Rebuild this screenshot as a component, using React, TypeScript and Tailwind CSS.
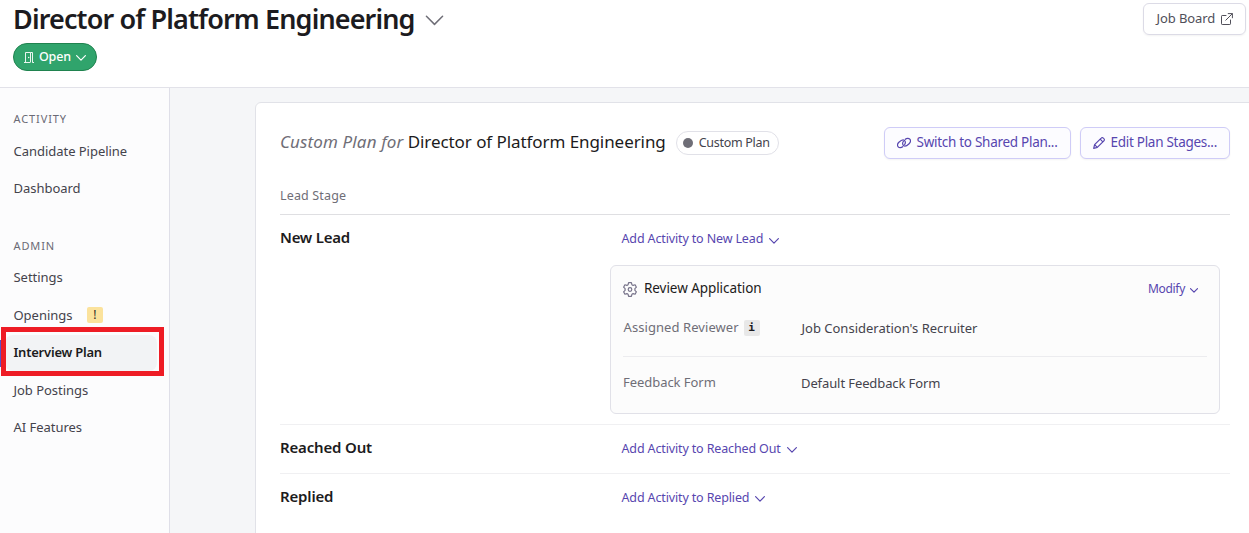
import { ReactNode } from 'react'
import clsx from 'clsx'

interface NavItem {
  label: string
  active?: boolean
  alert?: boolean
}

const activityItems: NavItem[] = [{ label: 'Candidate Pipeline' }, { label: 'Dashboard' }]

const adminItems: NavItem[] = [
  { label: 'Settings' },
  { label: 'Openings', alert: true },
  { label: 'Interview Plan', active: true },
  { label: 'Job Postings' },
  { label: 'AI Features' },
]

function Chevron({ className }: { className?: string }) {
  return (
    <svg viewBox="0 0 10 6" fill="none" stroke="currentColor" strokeWidth="1.2" strokeLinecap="round" strokeLinejoin="round" className={clsx('shrink-0', className)}>
      <path d="M0.6 0.7 5 5.1 9.4 0.7" vectorEffect="non-scaling-stroke" />
    </svg>
  )
}

function DoorIcon() {
  return (
    <svg width="10" height="12" viewBox="0 0 10 12" fill="none" stroke="currentColor" className="shrink-0">
      <path d="M0 11.5h6.500M1.500 11V1.500h5V11M6.500 1.500h2V11.500H10" strokeWidth=".9" />
      <circle cx="4.700" cy="6.500" r=".7" fill="currentColor" stroke="none" />
    </svg>
  )
}

function ExternalIcon() {
  return (
    <svg width="12" height="12" viewBox="0 0 12 12" fill="none" stroke="currentColor" strokeLinecap="round" strokeLinejoin="round" className="shrink-0">
      <path d="M5 2.500H1.200a.7.7 0 0 0-.7.7v7.600a.7.7 0 0 0 .7.7h7.600a.7.7 0 0 0 .7-.7V7M7.200.6h4.200v4.200M11.200.8 4.800 7.200" />
    </svg>
  )
}

function LinkIcon() {
  return (
    <svg width="14" height="12" viewBox="0 0 14 12" fill="none" stroke="currentColor" strokeWidth="1.2" strokeLinecap="round" className="shrink-0">
      <path d="M5.700 9.700C4.300 10.900 2.200 11 1.200 9.800S.4 6.700 1.900 5.300 5.700 2.300 7.200 3.300s1.500 3 .4 4.300" />
      <path d="M8.300 2.300C9.700 1.100 11.800 1 12.800 2.200s.8 3.100-.7 4.500S8.300 9.700 6.800 8.700s-1.500-3-.4-4.300" />
    </svg>
  )
}

function PencilIcon() {
  return (
    <svg width="12" height="12" viewBox="0 0 12 12" fill="none" stroke="currentColor" strokeWidth="1.2" strokeLinejoin="round" className="shrink-0">
      <path d="M.7 11.300 1.600 7.700 8.200 1.100a1.500 1.500 0 0 1 2.200 0l.5.5a1.500 1.500 0 0 1 0 2.200L4.300 10.400ZM1.600 7.700l2.700 2.700M7.200 2.200l2.600 2.600" />
    </svg>
  )
}

function GearIcon() {
  return (
    <svg width="14" height="15" viewBox="0 0 14 15" fill="none" stroke="currentColor" strokeWidth="1.2" strokeLinejoin="round" className="shrink-0">
      <path d="M5.600.7h2.800l.5 2 1.200.7 2-.6 1.300 2.400-1.500 1.500v1.600l1.500 1.500-1.300 2.400-2-.6-1.200.7-.5 2H5.600l-.5-2-1.200-.7-2 .6L.6 9.800l1.500-1.500V6.700L.6 5.200l1.300-2.400 2 .6 1.200-.7Z" />
      <circle cx="7" cy="7.500" r="1.800" />
    </svg>
  )
}

function NavGroup({ title, items }: { title: string; items: NavItem[] }) {
  return (
    <nav>
      <div className="flex h-[26.5px] items-center pl-[13.5px] text-[11px] tracking-[0.9px] text-[#6b6a75]">
        {title}
      </div>
      {items.map((item) => (
        <a
          key={item.label}
          className={clsx(
            'relative flex h-[37.5px] items-center pl-[13.5px] text-[13px]',
            item.active ? 'font-semibold tracking-[-0.22px] text-[#1c1b20]' : 'tracking-[-0.03px] text-[#44434c]',
          )}
        >
          {item.active && (
            <>
              <span className="absolute inset-y-px left-[5px] w-[152px] rounded-lg bg-[#f2f3f5]" />
              <span className="absolute left-0 top-[6px] h-[27px] w-[2px] bg-[#5b4fc4]" />
              {/* Highlight box around the current section */}
              <span className="absolute -top-[7px] left-px z-10 h-[49px] w-[163px] border-5 border-[#ee1c25]" />
            </>
          )}
          <span className="relative">{item.label}</span>
          {item.alert && (
            <span className="ml-[14.5px] flex size-4 items-center justify-center rounded-[2px] bg-[#fbe29c] text-xs text-[#2b2925]">
              !
            </span>
          )}
        </a>
      ))}
    </nav>
  )
}

function OutlineButton({ icon, children, className }: { icon: ReactNode; children: ReactNode; className: string }) {
  return (
    <button className={clsx('flex h-8 items-center rounded-md border border-[#cfccf7] bg-[#fcfcff] text-[13.5px] tracking-[-0.28px] text-[#5746af] shadow-xs', className)}>
      {icon}
      <span className="whitespace-nowrap pb-px">{children}</span>
    </button>
  )
}

function AddActivity({ stage, className }: { stage: string; className?: string }) {
  return (
    <button className={clsx('flex items-center gap-[6px] whitespace-nowrap pl-[0.5px] text-[12.5px] tracking-[-0.14px] text-[#5746af]', className)}>
      Add Activity to {stage}
      <Chevron className="mt-[2px] h-[6px] w-[10px]" />
    </button>
  )
}

function StageRow({ stage }: { stage: string }) {
  return (
    <div className="flex h-[49px] items-center border-t border-[#f0f0f2]">
      <h3 className="w-[341px] pb-1 text-[15px] font-semibold tracking-[-0.17px] text-[#1c1b20]">{stage}</h3>
      <AddActivity stage={stage} />
    </div>
  )
}

function ActivityCard() {
  return (
    <div className="ml-[330px] h-[149px] w-[610px] rounded-md border border-[#e1e1e8] bg-[#fcfcfc] px-3">
      <div className="flex h-[46px] items-center text-[13.5px] text-[#1c1b20]">
        <span className="text-[#77738a]"><GearIcon /></span>
        <span className="ml-[7px] pb-[2px] tracking-[-0.06px]">Review Application</span>
        <button className="ml-auto mr-[9px] flex items-center gap-[5px] text-[12px] tracking-[-0.3px] text-[#5746af]">
          Modify
          <Chevron className="mt-[3px] h-[5px] w-[8px]" />
        </button>
      </div>
      <div className="flex h-[45px] items-center border-b border-[#ececef] pb-[12px] text-[13px]">
        <span className="flex w-[178px] items-center gap-[5px] pl-[0.5px] tracking-[0.07px] text-[#6f6e77]">
          Assigned Reviewer
          <span className="flex size-4 items-center justify-center rounded-[2px] bg-[#e8e8e8] font-['DejaVu_Sans_Mono',monospace] text-[11px] font-bold text-[#1c1b20]">
            i
          </span>
        </span>
        <span className="pl-[0.5px] pt-px text-[#44434c]">Job Consideration's Recruiter</span>
      </div>
      <div className="flex h-[53px] items-center text-[13px]">
        <span className="w-[178px] pb-[2px] tracking-[-0.05px] text-[#6f6e77]">Feedback Form</span>
        <span className="tracking-[-0.1px] text-[#44434c]">Default Feedback Form</span>
      </div>
    </div>
  )
}

export default function App() {
  return (
    <div className="flex h-[533px] w-[1249px] flex-col overflow-hidden bg-white font-['Noto_Sans',sans-serif] text-[#1c1b20]">
      <header className="flex h-[88px] shrink-0 items-start justify-between border-b border-[#e2e2e9] pl-[13px] pr-[3px]">
        <div>
          <div className="flex h-[43px] items-start gap-[10px]">
            <h1 className="whitespace-nowrap text-[27px] font-semibold leading-[38px] tracking-[-0.87px]">
              Director of Platform Engineering
            </h1>
            <Chevron className="mt-[15px] h-[11px] w-[19px] stroke-[1.5] text-[#6f6e77]" />
          </div>
          <button className="flex h-7 w-[84px] items-center rounded-full border border-[#20834f] bg-[#30a46c] pl-[10px] text-[12.5px] font-medium tracking-[-0.2px] text-white">
            <DoorIcon />
            <span className="ml-[5px]">Open</span>
            <Chevron className="ml-[5px] mt-[2px] h-[6px] w-[10px]" />
          </button>
        </div>
        <button className="mt-[3px] flex h-8 w-[103px] items-center rounded-md border border-[#dcdbe6] pl-[12.5px] text-[13px] tracking-[-0.1px] text-[#504f59] shadow-xs">
          <span className="mr-[6px]">Job Board</span>
          <ExternalIcon />
        </button>
      </header>

      <div className="flex min-h-0 flex-1">
        <aside className="flex w-[170px] shrink-0 flex-col gap-[25px] border-r border-[#dfdfe8] bg-[#fcfcfd] pt-[18px]">
          <NavGroup title="ACTIVITY" items={activityItems} />
          <NavGroup title="ADMIN" items={adminItems} />
        </aside>

        <main className="flex-1 bg-[#f5f6f8] pl-[85px] pt-[14px]">
          <section className="h-[500px] w-[1100px] rounded-tl-md border border-[#e1e2e8] bg-white pl-6">
            <div className="w-[950px]">
              <div className="flex h-20 items-center">
                <h2 className="whitespace-nowrap pb-[2px] text-[17px] tracking-[-0.07px]">
                  <em className="tracking-[0.13px] text-[#6f6e77]">Custom Plan for</em> Director of Platform Engineering
                </h2>
                <span className="ml-[10px] flex h-6 w-[103px] items-center gap-[6px] whitespace-nowrap rounded-full border border-[#e1e1e8] pl-[6px] text-[12.5px] tracking-[-0.3px] text-[#44434c]">
                  <span className="size-[10px] rounded-full bg-[#6f6e77]" />
                  Custom Plan
                </span>
                <div className="ml-auto flex gap-[9px]">
                  <OutlineButton icon={<LinkIcon />} className="w-[187px] gap-[6px] pl-[11.5px]">
                    Switch to Shared Plan...
                  </OutlineButton>
                  <OutlineButton icon={<PencilIcon />} className="w-[150px] gap-[6px] pl-[11.5px]">
                    Edit Plan Stages...
                  </OutlineButton>
                </div>
              </div>

              <div className="h-8 border-b border-[#dfdfe2] text-[12.5px] leading-[26px] tracking-[0.15px] text-[#6f6e77]">Lead Stage</div>

              <div className="flex h-[50px] items-start pt-[11px]">
                <h3 className="w-[341px] text-[15px] font-semibold leading-[23px] tracking-[-0.25px]">New Lead</h3>
                <AddActivity stage="New Lead" className="mt-[2px] h-[23px]" />
              </div>
              <ActivityCard />
              <div className="h-[10px]" />
              <StageRow stage="Reached Out" />
              <StageRow stage="Replied" />
            </div>
          </section>
        </main>
      </div>
    </div>
  )
}
